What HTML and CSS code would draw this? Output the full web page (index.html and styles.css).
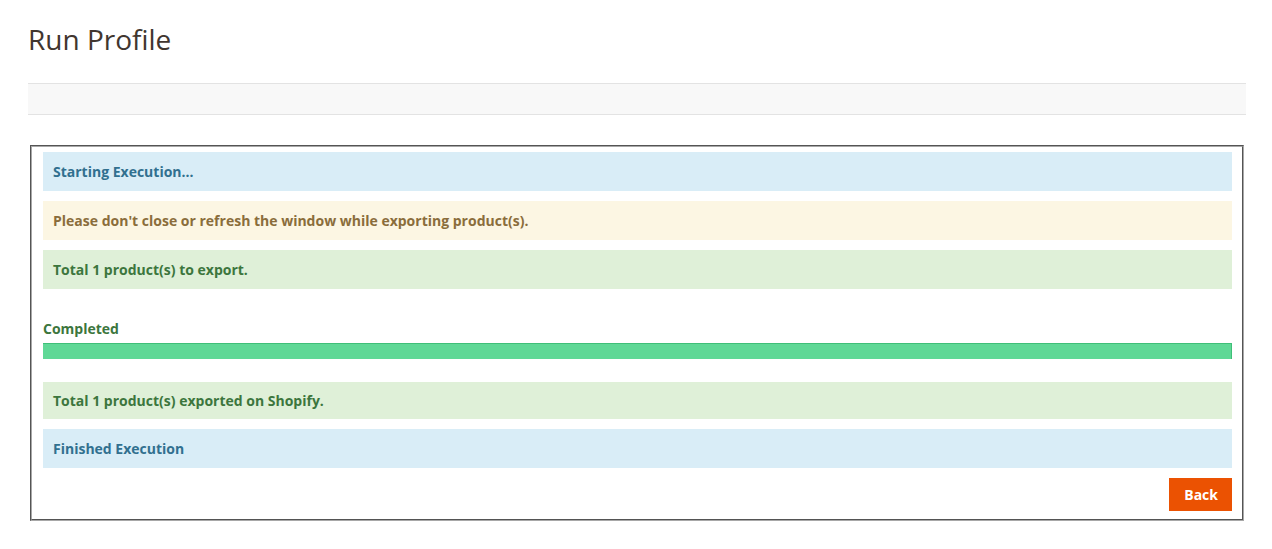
FILE: index.html
```html
<!DOCTYPE html>
<html lang="en">
<head>
    <meta charset="UTF-8">
    <meta name="viewport" content="width=device-width, initial-scale=1.0">
    <title>Run Profile</title>
    <link rel="stylesheet" href="styles.css">
</head>
<body>
    <div class="page">
        <h1 class="page-title">Run Profile</h1>
        <div class="page-actions"></div>

        <fieldset class="run-panel">
            <div class="message info">Starting Execution...</div>
            <div class="message warning">Please don't close or refresh the window while exporting product(s).</div>
            <div class="message success">Total 1 product(s) to export.</div>

            <div class="progress-label">Completed</div>
            <div class="progress">
                <div class="progress-fill" style="width:100%"></div>
            </div>

            <div class="message success result">Total 1 product(s) exported on Shopify.</div>
            <div class="message info">Finished Execution</div>

            <div class="panel-actions">
                <button class="back-button">Back</button>
            </div>
        </fieldset>
    </div>
</body>
</html>
```

FILE: styles.css
```css
body {
    margin: 0;
    background-color: #ffffff;
    font-family: "Open Sans", "Liberation Sans", Arial, sans-serif;
    color: #303030;
}
.page {
    padding: 0 26px 0 28px;
}
.page-title {
    margin: 0;
    padding-top: 22px;
    font-size: 28px;
    font-weight: 400;
    line-height: 34px;
    color: #41362f;
}
.page-actions {
    margin-top: 27px;
    height: 30px;
    background-color: #f8f8f8;
    border-top: 1px solid #e3e3e3;
    border-bottom: 1px solid #e3e3e3;
}
.run-panel {
    margin: 30px 2px 0 2px;
    padding: 5px 10px 8px 11px;
    border: 2px groove #a8a8a8;
    min-width: 0;
}
.message {
    padding: 10px;
    line-height: 19px;
    font-size: 14px;
    font-weight: 700;
    margin-bottom: 10px;
}
.message.result {
    padding: 9px 10px;
}
.message.info {
    background-color: #d9edf7;
    color: #31708f;
}
.message.warning {
    background-color: #fcf6e3;
    color: #8a6d3b;
}
.message.success {
    background-color: #dff0d8;
    color: #3c763d;
}
.progress-label {
    margin-top: 30px;
    line-height: 19px;
    font-size: 14px;
    font-weight: 700;
    color: #3c763d;
}
.progress {
    margin-top: 5px;
    margin-bottom: 23px;
    height: 16px;
    background-color: #f5f5f5;
}
.progress-fill {
    height: 100%;
    box-sizing: border-box;
    background-color: #5fd896;
    border: 1px solid #3fbf78;
    border-left: none;
    border-bottom: none;
}
.panel-actions {
    display: flex;
    justify-content: flex-end;
}
.back-button {
    height: 33px;
    padding: 0 14px 0 15px;
    border: none;
    background-color: #eb5202;
    color: #ffffff;
    font-family: "Open Sans", "Liberation Sans", Arial, sans-serif;
    font-size: 14px;
    font-weight: 700;
    cursor: pointer;
}
.back-button:hover {
    background-color: #ba4000;
}
```
